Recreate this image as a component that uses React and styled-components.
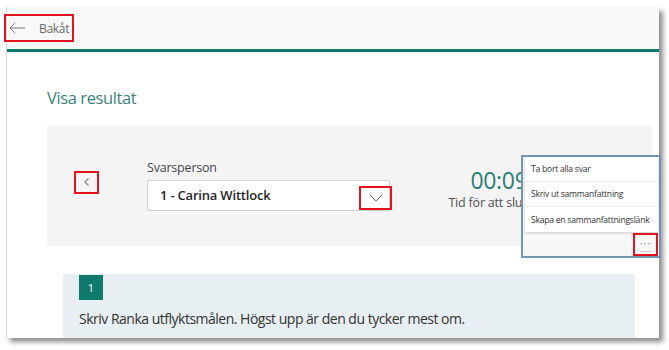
import React from 'react';
import styled, { createGlobalStyle } from 'styled-components';

const GlobalStyle = createGlobalStyle`
  html, body {
    margin: 0;
    padding: 0;
    background: #ffffff;
  }
  body {
    font-family: "Open Sans", "Noto Sans", sans-serif;
    color: #333333;
  }
  * {
    box-sizing: border-box;
  }
`;

const Stage = styled.div`
  position: relative;
  width: 669px;
  height: 350px;
  overflow: hidden;
`;

const Window = styled.div`
  margin: 7px 0 0 6px;
  width: 653px;
  height: 331px;
  display: flex;
  flex-direction: column;
  background: #ffffff;
  border-left: 1px solid #d6d6d6;
  box-shadow: 4px 4px 5px rgba(0, 0, 0, 0.45);
`;

const TopBar = styled.div`
  height: 45px;
  flex-shrink: 0;
  display: flex;
  align-items: center;
  background: #f8f8f8;
  border-bottom: 3px solid #0e7a6d;
`;

// red annotation frame around a control
const Marked = styled.div`
  border: 2px solid #e0141e;
  display: flex;
  align-items: center;
  justify-content: ${(p) => p.$justify || 'center'};
  width: ${(p) => p.$w}px;
  height: ${(p) => p.$h}px;
  margin: ${(p) => p.$margin || '0'};
  flex-shrink: 0;
`;

const BackLabel = styled.span`
  font-size: 12px;
  color: #6a6a6a;
  margin-left: 14px;
  letter-spacing: -0.3px;
`;

const Body = styled.div`
  flex: 1;
  overflow: hidden;
  padding-left: 40px;
`;

const Title = styled.h1`
  margin: 34px 0 15px;
  font-size: 16.5px;
  line-height: 24px;
  font-weight: 400;
  color: #3b8379;
  letter-spacing: -0.4px;
`;

const ResultPanel = styled.div`
  width: 605px;
  height: 121px;
  background: #f4f4f4;
  display: flex;
  align-items: center;
  padding-left: 27px;
`;

const Field = styled.div`
  display: flex;
  flex-direction: column;
  margin-left: 48px;
  margin-bottom: 2px;
`;

const FieldLabel = styled.label`
  font-size: 12.5px;
  color: #444444;
  line-height: 17px;
  margin-bottom: 4px;
  letter-spacing: -0.2px;
`;

const Dropdown = styled.div`
  width: 243px;
  height: 31px;
  background: #ffffff;
  border: 1px solid #d2d2d2;
  display: flex;
  align-items: center;
  justify-content: space-between;
  padding-left: 12px;
`;

const DropdownValue = styled.span`
  font-size: 13px;
  font-weight: 600;
  color: #252525;
  letter-spacing: -0.2px;
`;

const Timer = styled.div`
  width: 130px;
  margin-left: 44px;
  margin-top: 6px;
  display: flex;
  flex-direction: column;
  align-items: center;
`;

const TimerValue = styled.div`
  font-size: 23px;
  line-height: 28px;
  color: #2a7f74;
  letter-spacing: -0.3px;
`;

const TimerCaption = styled.div`
  font-size: 12.5px;
  line-height: 18px;
  color: #505050;
  white-space: nowrap;
  letter-spacing: -0.2px;
`;

const Question = styled.div`
  margin: 28px 0 0 16px;
  width: 572px;
  height: 80px;
  background: #e7eff2;
  padding: 1px 0 0 16px;
`;

const Badge = styled.div`
  width: 24px;
  height: 25px;
  background: #0f7a6c;
  color: #ffffff;
  font-size: 11px;
  display: flex;
  align-items: center;
  justify-content: center;
`;

const QuestionText = styled.p`
  margin: 9px 0 0;
  font-size: 14px;
  line-height: 20px;
  color: #333333;
  letter-spacing: -0.5px;
`;

// zoomed callout of the "more" menu
const Callout = styled.div`
  position: absolute;
  left: 521px;
  top: 155px;
  width: 140px;
  height: 103px;
  border: 2px solid #7196b8;
  background: #f7f7f7;
  display: flex;
  flex-direction: column;
  padding: 0 1px 0 2px;
`;

const Menu = styled.ul`
  list-style: none;
  margin: 0;
  padding: 0;
  background: #ffffff;
  box-shadow: 0 1px 3px rgba(0, 0, 0, 0.18);
`;

const MenuItem = styled.li`
  height: 25px;
  display: flex;
  align-items: center;
  padding-left: 6px;
  font-size: 8.6px;
  color: #333333;
  white-space: nowrap;
  letter-spacing: -0.25px;
  border-bottom: 1px solid #efefef;
  &:last-child {
    border-bottom: none;
  }
`;

const MenuFooter = styled.div`
  flex: 1;
  display: flex;
  justify-content: flex-end;
  align-items: center;
`;

const Dots = styled.span`
  font-size: 11px;
  line-height: 1;
  color: #8a8a8a;
  letter-spacing: 1px;
  padding-bottom: 3px;
  border-bottom: 1px solid #cfcfcf;
`;

const ArrowLeft = () => (
  <svg width="16" height="12" viewBox="0 0 16 12" fill="none" stroke="#777" strokeWidth="1">
    <path d="M16 6H1M6 1L1 6l5 5" />
  </svg>
);

const ChevronLeft = () => (
  <svg width="7" height="10" viewBox="0 0 7 10" fill="none" stroke="#9a9a9a" strokeWidth="1.6">
    <path d="M5.5 1.5L2 5l3.5 3.5" />
  </svg>
);

const ChevronDown = () => (
  <svg width="14" height="8" viewBox="0 0 14 8" fill="none" stroke="#666" strokeWidth="1">
    <path d="M1 1l6 6 6-6" />
  </svg>
);

const menuItems = [
  'Ta bort alla svar',
  'Skriv ut sammanfattning',
  'Skapa en sammanfattningslänk',
];

export default function App() {
  return (
    <>
      <GlobalStyle />
      <Stage>
        <Window>
          <TopBar>
            <Marked $w={70} $h={28} $justify="flex-start" $margin="0 0 0 -3px">
              <span style={{ marginLeft: 3, display: 'flex' }}>
                <ArrowLeft />
              </span>
              <BackLabel>Bakåt</BackLabel>
            </Marked>
          </TopBar>
          <Body>
            <Title>Visa resultat</Title>
            <ResultPanel>
              <Marked $w={25} $h={23} $margin="0 0 7px 0">
                <ChevronLeft />
              </Marked>
              <Field>
                <FieldLabel>Svarsperson</FieldLabel>
                <Dropdown>
                  <DropdownValue>1 - Carina Wittlock</DropdownValue>
                  <Marked $w={33} $h={24} $margin="5px -3px 0 0">
                    <ChevronDown />
                  </Marked>
                </Dropdown>
              </Field>
              <Timer>
                <TimerValue>00:09</TimerValue>
                <TimerCaption>Tid för att slutföra</TimerCaption>
              </Timer>
            </ResultPanel>
            <Question>
              <Badge>1</Badge>
              <QuestionText>
                Skriv Ranka utflyktsmålen. Högst upp är den du tycker mest om.
              </QuestionText>
            </Question>
          </Body>
        </Window>
        <Callout>
          <Menu>
            {menuItems.map((item) => (
              <MenuItem key={item}>{item}</MenuItem>
            ))}
          </Menu>
          <MenuFooter>
            <Marked $w={25} $h={23}>
              <Dots>···</Dots>
            </Marked>
          </MenuFooter>
        </Callout>
      </Stage>
    </>
  );
}
